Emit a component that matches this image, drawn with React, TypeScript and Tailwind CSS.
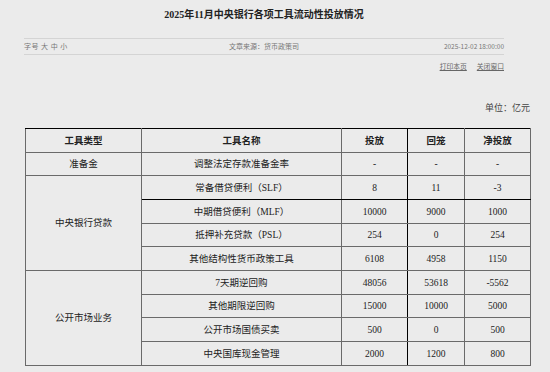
import React from "react";

type Row = {
  type?: string;
  span?: number;
  name: string;
  put: string;
  back: string;
  net: string;
  h: string;
  blackTop?: boolean;
  blackBottom?: boolean;
};

const rows: Row[] = [
  { type: "准备金", span: 1, name: "调整法定存款准备金率", put: "-", back: "-", net: "-", h: "h-[23px]" },
  { type: "中央银行贷款", span: 4, name: "常备借贷便利（SLF）", put: "8", back: "11", net: "-3", h: "h-[24px]", blackBottom: true },
  { name: "中期借贷便利（MLF）", put: "10000", back: "9000", net: "1000", h: "h-[24px]", blackTop: true },
  { name: "抵押补充贷款（PSL）", put: "254", back: "0", net: "254", h: "h-[23px]" },
  { name: "其他结构性货币政策工具", put: "6108", back: "4958", net: "1150", h: "h-[24px]" },
  { type: "公开市场业务", span: 4, name: "7天期逆回购", put: "48056", back: "53618", net: "-5562", h: "h-[24px]" },
  { name: "其他期限逆回购", put: "15000", back: "10000", net: "5000", h: "h-[23px]" },
  { name: "公开市场国债买卖", put: "500", back: "0", net: "500", h: "h-[24px]" },
  { name: "中央国库现金管理", put: "2000", back: "1200", net: "800", h: "h-[24px]" },
];

const cell = "border border-[#6a6a6a] text-center align-middle p-0";

export default function App() {
  return (
    <div
      className="w-full min-h-[372px] bg-[#ebebeb] text-[#222]"
      style={{ fontFamily: '"Liberation Serif", "Noto Sans CJK SC", serif' }}
    >
      <div className="ml-[24px] w-[480px]">
        <h1 className="h-[30px] pt-[8px] text-center text-[10px] font-bold leading-[14px] text-[#222]">
          2025年11月中央银行各项工具流动性投放情况
        </h1>
        <div
          className="mt-[8px] flex h-[17px] items-center justify-between border-y border-[#d4d4d4] text-[7px] text-[#777]"
          style={{ fontFamily: '"Noto Sans CJK SC", sans-serif' }}
        >
          <span className="w-[120px] tracking-[0.5px]">字号 大 中 小</span>
          <span>文章来源：货币政策司</span>
          <span className="w-[120px] text-right text-[6.5px]">2025-12-02 18:00:00</span>
        </div>
        <div
          className="mt-[6px] flex justify-end gap-[10px] text-[6.8px] text-[#666]"
          style={{ fontFamily: '"Noto Sans CJK SC", sans-serif' }}
        >
          <span className="underline">打印本页</span>
          <span className="underline">关闭窗口</span>
        </div>
      </div>

      <div className="ml-[25px] w-[505px]">
        <div
          className="mt-[31px] text-right text-[9px] leading-[12px] text-[#444]"
          style={{ fontFamily: '"Noto Sans CJK SC", sans-serif' }}
        >
          单位：亿元
        </div>
        <table className="mt-[14px] w-[505px] table-fixed border-collapse text-[9.5px] leading-[12px]">
          <colgroup>
            <col className="w-[116px]" />
            <col className="w-[200px]" />
            <col className="w-[66px]" />
            <col className="w-[57px]" />
            <col className="w-[66px]" />
          </colgroup>
          <tbody>
            <tr className="h-[24px] font-bold">
              <td className={`${cell} border-t-black`}>工具类型</td>
              <td className={`${cell} border-t-black`}>工具名称</td>
              <td className={`${cell} border-t-black border-r-black`}>投放</td>
              <td className={`${cell} border-t-black border-l-black`}>回笼</td>
              <td className={`${cell} border-t-black`}>净投放</td>
            </tr>
            {rows.map((r, i) => {
              const t = r.blackTop ? " border-t-black" : "";
              const b = r.blackBottom ? " border-b-black" : "";
              return (
                <tr key={i} className={r.h}>
                  {r.type && (
                    <td rowSpan={r.span} className={cell}>
                      {r.type}
                    </td>
                  )}
                  <td className={cell + t + b}>{r.name}</td>
                  <td className={cell + t + b + " border-r-black"}>{r.put}</td>
                  <td className={cell + t + b + " border-l-black"}>{r.back}</td>
                  <td className={cell + t + b}>{r.net}</td>
                </tr>
              );
            })}
          </tbody>
        </table>
      </div>
    </div>
  );
}
